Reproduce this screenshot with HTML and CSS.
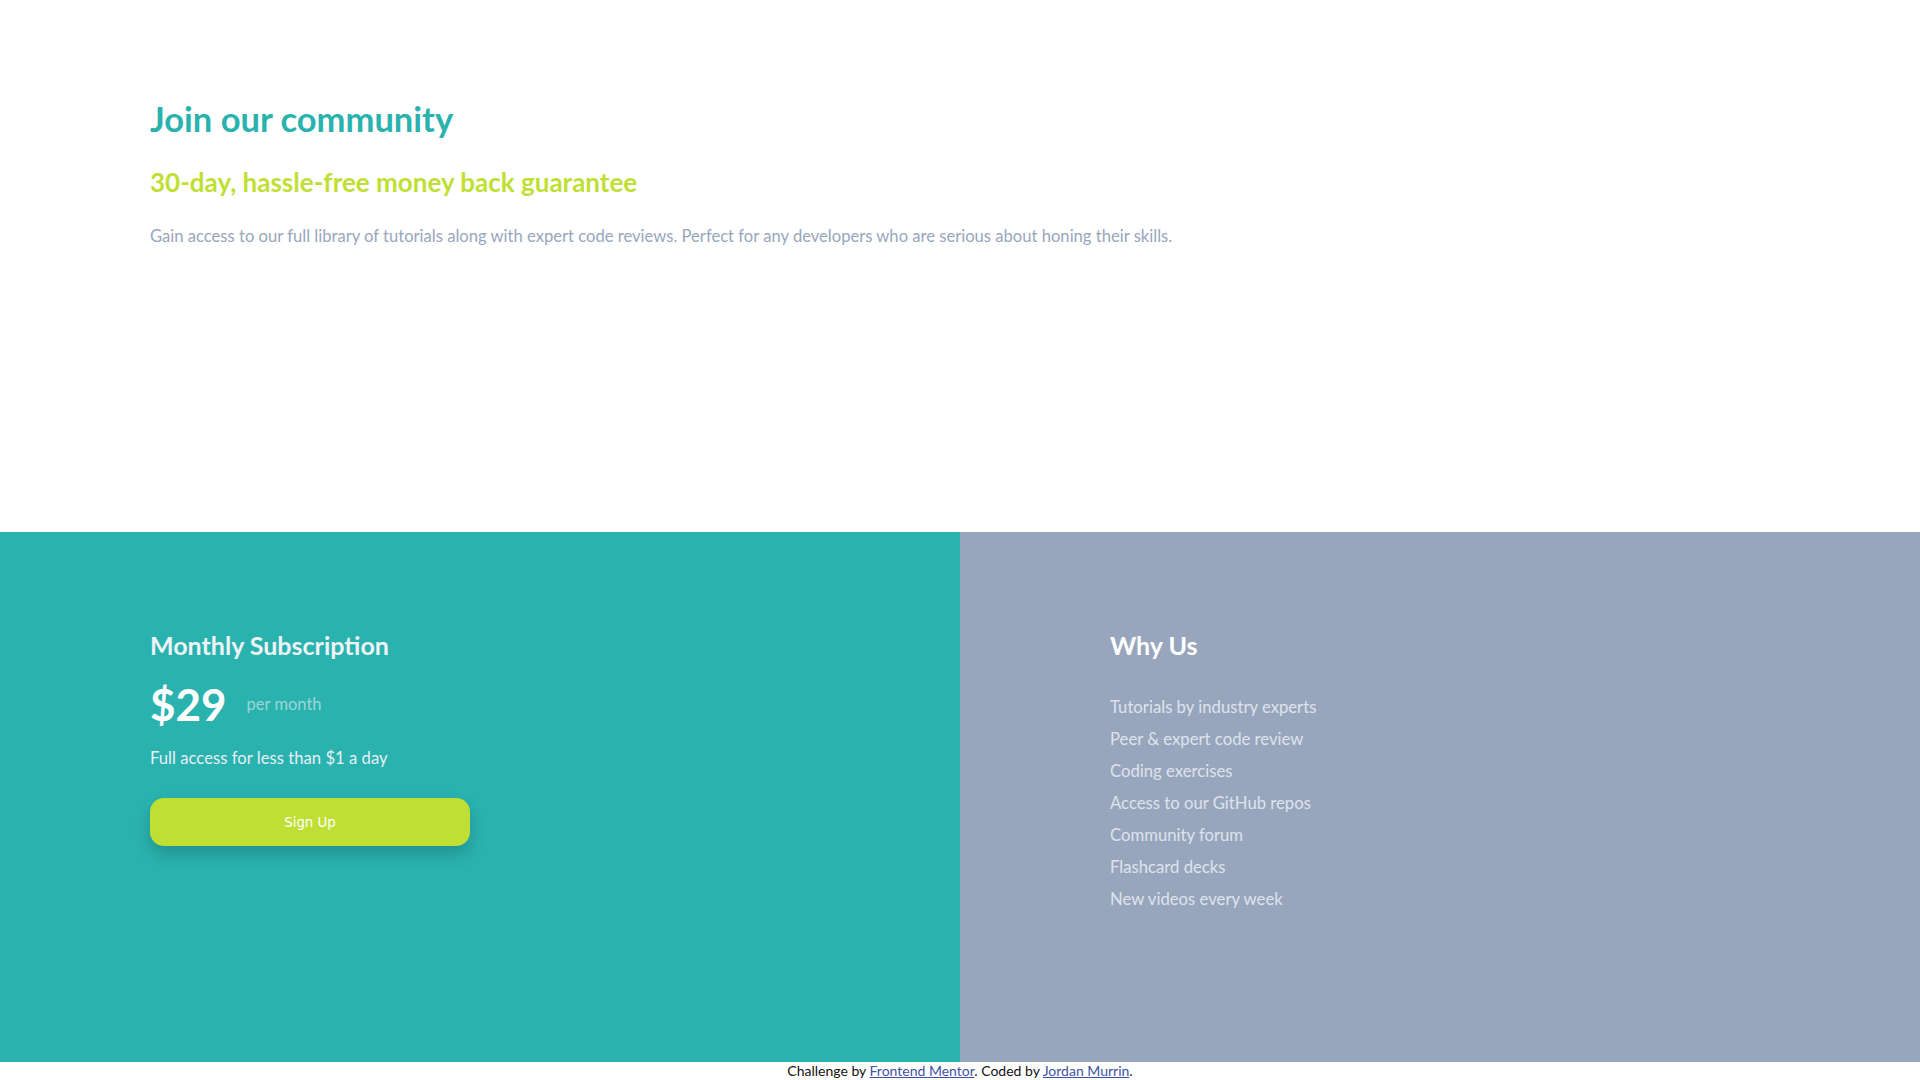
FILE: index.html
```html
<!DOCTYPE html>
<html lang="en">
<head>
<meta charset="utf-8">
<title>Single Price Grid</title>
<link rel="stylesheet" href="styles.css">
</head>
<body>
<main class="grid">
  <section class="intro">
    <h1 class="intro-title">Join our community</h1>
    <h2 class="intro-sub">30-day, hassle-free money back guarantee</h2>
    <p class="intro-text">Gain access to our full library of tutorials along with expert code reviews. Perfect for any developers who are serious about honing their skills.</p>
  </section>
  <div class="bottom">
    <section class="sub">
      <h3 class="col-title">Monthly Subscription</h3>
      <div class="price-row">
        <span class="price">$29</span>
        <span class="per">per month</span>
      </div>
      <p class="access">Full access for less than $1 a day</p>
      <button class="signup">Sign Up</button>
    </section>
    <section class="why">
      <h3 class="col-title">Why Us</h3>
      <ul class="why-list">
        <li>Tutorials by industry experts</li>
        <li>Peer &amp; expert code review</li>
        <li>Coding exercises</li>
        <li>Access to our GitHub repos</li>
        <li>Community forum</li>
        <li>Flashcard decks</li>
        <li>New videos every week</li>
      </ul>
    </section>
  </div>
</main>
<footer class="attribution">Challenge by <a href="#">Frontend Mentor</a>. Coded by <a href="#">Jordan Murrin</a>.</footer>
</body>
</html>
```

FILE: styles.css
```css
* { box-sizing: border-box; }
html, body { margin: 0; padding: 0; }
body {
  font-family: "Lato", "Liberation Sans", sans-serif;
  background: #ffffff;
}
.grid { display: flex; flex-direction: column; }
.intro {
  height: 532px;
  padding: 98px 150px 0;
}
.intro-title {
  margin: 0;
  font-size: 34.5px;
  line-height: 42px;
  font-weight: 700;
  color: #2ab2af;
}
.intro-sub {
  margin: 26px 0 0;
  font-size: 26px;
  line-height: 32px;
  font-weight: 700;
  color: #c0df34;
}
.intro-text {
  margin: 26px 0 0;
  font-size: 16.6px;
  line-height: 24px;
  color: #98a6bd;
}
.bottom {
  display: grid;
  grid-template-columns: 960px 960px;
  height: 530px;
}
.sub {
  background: #2ab2af;
  padding: 97px 150px 0;
}
.why {
  background: #98a6bd;
  padding: 97px 150px 0;
}
.col-title {
  margin: 0;
  font-size: 25px;
  line-height: 32px;
  font-weight: 700;
  color: #eef3f7;
}
.why .col-title { color: #ffffff; }
.price-row {
  display: flex;
  align-items: center;
  gap: 20px;
  margin-top: 19px;
  height: 48px;
}
.price {
  font-size: 44px;
  line-height: 48px;
  font-weight: 700;
  color: #ffffff;
}
.per {
  font-size: 16.5px;
  line-height: 24px;
  color: rgba(230, 239, 245, 0.6);
}
.access {
  margin: 18px 0 0;
  font-size: 16.7px;
  line-height: 24px;
  color: #e6eff5;
}
.signup {
  display: block;
  margin-top: 28px;
  width: 320px;
  height: 48px;
  border: 0;
  border-radius: 14px;
  background: #c0df34;
  color: #ffffff;
  font-family: "DejaVu Sans", sans-serif;
  font-size: 13.33px;
  box-shadow: 0 8px 16px rgba(0, 0, 0, 0.18);
}
.why-list {
  list-style: none;
  margin: 30px 0 0;
  padding: 0;
}
.why-list li {
  font-size: 16.7px;
  line-height: 32px;
  color: rgba(240, 244, 250, 0.8);
}
.attribution {
  height: 18px;
  font-size: 14px;
  line-height: 18px;
  text-align: center;
  color: #111111;
}
.attribution a { color: #3e52a3; }
```
